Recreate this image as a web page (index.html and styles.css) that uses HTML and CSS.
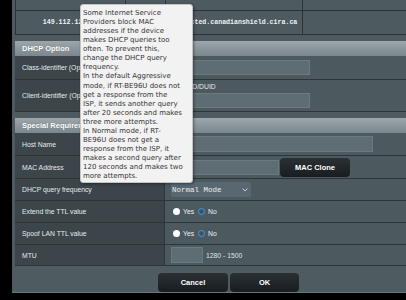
FILE: index.html
```html
<!DOCTYPE html>
<html>
<head>
<meta charset="utf-8">
<link rel="stylesheet" href="styles.css">
</head>
<body>
<div class="panel">
  <div class="toptable">
    <div class="c"></div><div class="c"></div><div class="c"></div><div class="c last"></div>
    <div class="c mono">149.112.121.20</div><div class="c"></div><div class="c mono">protected.canadianshield.cira.ca</div><div class="c last"></div>
  </div>

  <div class="sechead">DHCP Option</div>
  <div class="form">
    <div class="row r-class">
      <div class="lab">Class-identifier (Option 60):</div>
      <div class="val"><span class="inp w-id"></span></div>
    </div>
    <div class="row r-client">
      <div class="lab">Client-identifier (Option 61):</div>
      <div class="val col">
        <span class="duid"><span class="chk"></span>IAID/DUID</span>
        <span class="inp w-id"></span>
      </div>
    </div>
  </div>

  <div class="sechead">Special Requirement from ISP</div>
  <div class="form">
    <div class="row r-host">
      <div class="lab">Host Name</div>
      <div class="val"><span class="inp w-host"></span></div>
    </div>
    <div class="row r-mac">
      <div class="lab">MAC Address</div>
      <div class="val"><span class="inp w-mac"></span><span class="btn mac">MAC Clone</span></div>
    </div>
    <div class="row r-freq">
      <div class="lab">DHCP query frequency</div>
      <div class="val"><span class="sel">Normal Mode<svg class="chev" width="6" height="4" viewBox="0 0 6 4"><polyline points="0.5,0.5 3,3 5.5,0.5" fill="none" stroke="#c9d0d3" stroke-width="1"/></svg></span></div>
    </div>
    <div class="row r-ttl">
      <div class="lab">Extend the TTL value</div>
      <div class="val"><span class="rad off"></span><span class="rl">Yes</span><span class="rad on"></span><span class="rl">No</span></div>
    </div>
    <div class="row r-ttl">
      <div class="lab">Spoof LAN TTL value</div>
      <div class="val"><span class="rad off"></span><span class="rl">Yes</span><span class="rad on"></span><span class="rl">No</span></div>
    </div>
    <div class="row r-mtu">
      <div class="lab">MTU</div>
      <div class="val"><span class="inp w-mtu"></span><span class="hint">1280 - 1500</span></div>
    </div>
  </div>

  <div class="actions">
    <span class="btn cancel">Cancel</span>
    <span class="btn ok">OK</span>
  </div>
</div>

<div class="tooltip">Some Internet Service<br>Providers block MAC<br>addresses if the device<br>makes DHCP queries too<br>often. To prevent this,<br>change the DHCP query<br>frequency.<br>In the default Aggressive<br>mode, if RT-BE96U does not<br>get a response from the<br>ISP, it sends another query<br>after 20 seconds and makes<br>three more attempts.<br>In Normal mode, if RT-<br>BE96U does not get a<br>response from the ISP, it<br>makes a second query after<br>120 seconds and makes two<br>more attempts.</div>
</body>
</html>
```

FILE: styles.css
```css
* { box-sizing: border-box; margin: 0; padding: 0; }
html, body { width: 406px; height: 300px; overflow: hidden; background: #000; }
body { position: relative; font-family: "Liberation Sans", Arial, sans-serif; color: #e6eaec; font-size: 6.8px; }

.panel {
  margin-left: 12px;
  width: 394px;
  height: 293px;
  background: #4e5a60;
  padding-left: 3px;
  display: flex;
  flex-direction: column;
  border-bottom: 1px solid #67757b;
}

.toptable {
  display: grid;
  grid-template-columns: 110px 40px 137px 1fr;
  grid-template-rows: 11px 24px;
  border-left: 1px solid #2b3337;
  background: #4d5a60;
}
.toptable .c {
  border-right: 1px solid #2b3337;
  border-bottom: 1px solid #2b3337;
  display: flex;
  align-items: center;
  justify-content: center;
}
.toptable .c.last { border-right: none; }
.mono {
  font-family: "Liberation Mono", "DejaVu Sans Mono", monospace;
  font-size: 6.6px;
  font-weight: bold;
  color: #eef1f2;
  white-space: nowrap;
}

.sechead {
  margin-top: 6px;
  height: 15px;
  background: linear-gradient(#9ca6ab, #7b878d);
  color: #fff;
  font-weight: bold;
  font-size: 7.5px;
  padding-left: 7px;
  display: flex;
  align-items: center;
  text-shadow: 0 0 1px rgba(0,0,0,0.3);
}

.form { display: flex; flex-direction: column; }
.row {
  display: grid;
  grid-template-columns: 150px 1fr;
  border-bottom: 1px solid #2d3539;
}
.lab {
  background: #3b454a;
  padding-left: 7px;
  display: flex;
  align-items: center;
  white-space: nowrap;
  overflow: hidden;
  border-right: 1px solid #2d3539;
}
.val {
  background: #4c595f;
  padding-left: 6px;
  display: flex;
  align-items: center;
}
.val.col { flex-direction: column; align-items: flex-start; justify-content: center; gap: 3px; }

.r-class { height: 24px; }
.r-client { height: 32px; }
.r-host { height: 23px; }
.r-mac { height: 23px; }
.r-freq { height: 22px; }
.r-ttl { height: 22px; }
.r-mtu { height: 21px; }

.inp {
  display: block;
  height: 15px;
  background: #5e6d73;
  border: 1px solid #6c7a80;
}
.w-id { width: 139px; }
.w-host { width: 202px; height: 16px; }
.w-mac { width: 108px; }
.w-mtu { width: 32px; height: 16px; }

.duid { display: flex; align-items: center; gap: 3px; padding-left: 3px; white-space: nowrap; }
.chk { width: 7px; height: 7px; background: #fff; border-radius: 1px; }

.btn {
  display: flex;
  align-items: center;
  justify-content: center;
  height: 19px;
  border-radius: 4px;
  background: linear-gradient(#2a3034, #191d20);
  color: #fff;
  font-weight: bold;
  font-size: 7.5px;
}
.btn.mac { width: 70px; margin-left: 1px; }

.sel {
  position: relative;
  display: flex;
  align-items: center;
  width: 80px;
  height: 15px;
  background: #596870;
  border-radius: 2px;
  padding-left: 1px;
  font-family: "Liberation Mono", "DejaVu Sans Mono", monospace;
  font-size: 7.5px;
  color: #e8ecee;
}
.chev { position: absolute; right: 3px; top: 6px; }

.rad { width: 7px; height: 7px; border-radius: 50%; margin-left: 2px; }
.rad.off { background: #fff; }
.rad.on { background: #41525a; border: 1.6px solid #3b9cf0; margin-left: 4px; }
.rl { margin-left: 3px; color: #eef1f2; }

.hint { margin-left: 3px; color: #dfe4e6; }

.actions {
  flex: 1;
  display: flex;
  padding-top: 7px;
  padding-left: 143px;
  gap: 2px;
  background: #4e5b61;
}
.btn.cancel { width: 70px; }
.btn.ok { width: 69px; }

.tooltip {
  position: absolute;
  left: 80px;
  top: 4px;
  width: 113px;
  height: 179px;
  background: #f2f2f2;
  border: 1px solid #c4c4c4;
  border-radius: 3px;
  box-shadow: 1px 1px 3px rgba(0,0,0,0.4);
  padding: 4px 0 0 2px;
  font-family: "DejaVu Sans", Verdana, sans-serif;
  font-size: 7px;
  line-height: 9.06px;
  color: #363636;
  white-space: nowrap;
  overflow: hidden;
}
```
